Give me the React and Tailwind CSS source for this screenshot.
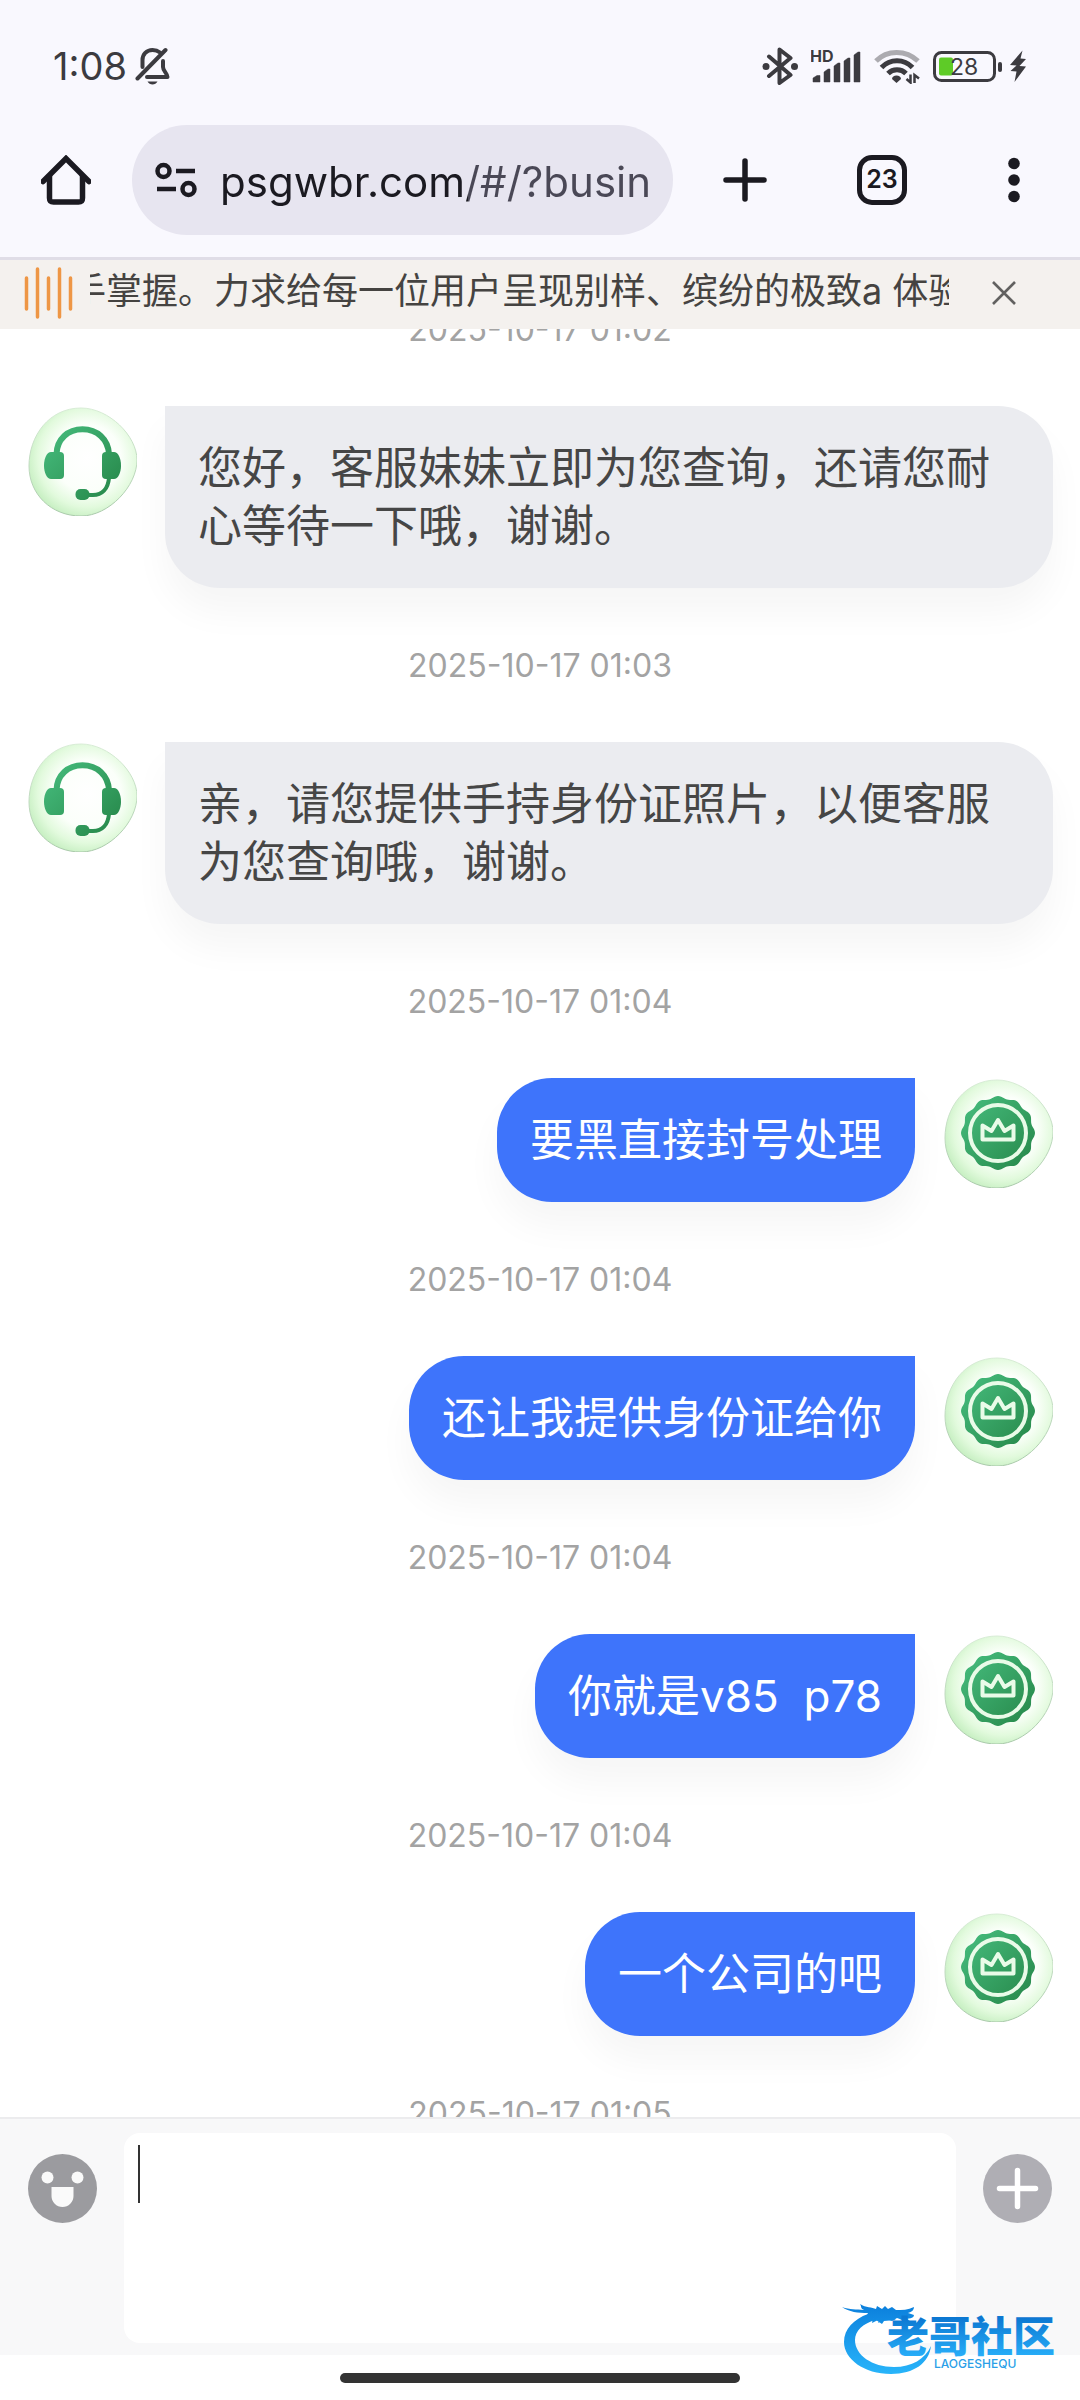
import { useState } from "react";

const messages = [
  { id: 1, time: "2025-10-17 01:02", from: "agent", text: "您好，客服妹妹立即为您查询，还请您耐心等待一下哦，谢谢。" },
  { id: 2, time: "2025-10-17 01:03", from: "agent", text: "亲，请您提供手持身份证照片，以便客服为您查询哦，谢谢。" },
  { id: 3, time: "2025-10-17 01:04", from: "user", text: "要黑直接封号处理" },
  { id: 4, time: "2025-10-17 01:04", from: "user", text: "还让我提供身份证给你" },
  { id: 5, time: "2025-10-17 01:04", from: "user", text: "你就是v85\u00a0\u00a0p78" },
  { id: 6, time: "2025-10-17 01:04", from: "user", text: "一个公司的吧" },
  { id: 7, time: "2025-10-17 01:05", from: "user", text: "" },
];

const BLOB =
  "M54 2C82 2 110 30 110 54C110 80 82 110 54 110C24 110 2 88 2 60C2 30 22 2 54 2Z";

// twelve soft teeth around the badge
const badgePoints = Array.from({ length: 144 }, (_, i) => {
  const a = (i / 144) * Math.PI * 2;
  const r = 35.8 + 1.2 * Math.cos(12 * a);
  return `${(55 + r * Math.sin(a)).toFixed(2)},${(55 - r * Math.cos(a)).toFixed(2)}`;
}).join(" ");

const AvatarBase = ({ id, label, children }) => (
  <svg viewBox="0 0 110 110" className="size-[110px] shrink-0" role="img" aria-label={label}>
    <defs>
      <radialGradient id={`${id}-bg`} cx="0.54" cy="0.46" r="0.56">
        <stop offset="0" stopColor="#ffffff" />
        <stop offset="0.55" stopColor="#fbfffa" />
        <stop offset="0.82" stopColor="#e2fadd" />
        <stop offset="1" stopColor="#c9f0c4" />
      </radialGradient>
      <linearGradient id={`${id}-edge`} x1="0" y1="0" x2="0" y2="1">
        <stop offset="0" stopColor="#d8ecd6" />
        <stop offset="1" stopColor="#a9c9aa" />
      </linearGradient>
      <linearGradient id={`${id}-fg`} x1="16" y1="20" x2="94" y2="94" gradientUnits="userSpaceOnUse">
        <stop offset="0.1" stopColor="#44b97a" />
        <stop offset="0.9" stopColor="#288a4c" />
      </linearGradient>
    </defs>
    <path d={BLOB} fill={`url(#${id}-bg)`} stroke={`url(#${id}-edge)`} strokeWidth="1" />
    {children}
  </svg>
);

const AgentAvatar = ({ id }) => (
  <AvatarBase id={id} label="客服">
    <g fill={`url(#${id}-fg)`}>
      <path d="M24 46h9a4 4 0 0 1 4 4v19a4 4 0 0 1-4 4h-9c-4 0-7-6-7-13.500s3-13.500 7-13.500z" />
      <path d="M79 46h8c4 0 7 6 7 13.500s-3 13.500-7 13.500h-8a4 4 0 0 1-4-4V50a4 4 0 0 1 4-4z" />
      <rect x="48.500" y="83" width="14" height="11" rx="5" />
    </g>
    <g fill="none" stroke={`url(#${id}-fg)`} strokeLinecap="round">
      <path d="M29.500 48C30 33 41 23.200 55.500 23.200S81 33 82 48" strokeWidth="6" />
      <path d="M82 72C81 83 75 89 66 89H60" strokeWidth="4" />
    </g>
  </AvatarBase>
);

const UserAvatar = ({ id }) => (
  <AvatarBase id={id} label="我">
    <polygon points={badgePoints} fill={`url(#${id}-fg)`} />
    <circle cx="55" cy="55" r="28" fill="none" stroke="#e9fbe8" strokeWidth="4" />
    <path
      d="M39.500 61.500V47.500L48.500 53L55 42L61.500 53L70.500 47.500V61.500Z"
      fill="none"
      stroke="#e9fbe8"
      strokeWidth="4"
      strokeLinejoin="round"
    />
  </AvatarBase>
);

const StatusBar = () => (
  <div className="flex h-[88px] items-end justify-between pr-[54px] pl-[53px] text-[#3c3b40]">
    <div className="flex h-11 items-center gap-2">
      <span className="text-[38px] leading-11">1:08</span>
      <svg viewBox="0 0 35 38" className="h-[38px] w-[35px]" fill="none" stroke="currentColor" strokeWidth="4" strokeLinecap="round">
        <path d="M2.500 31.500L30.500 3" />
        <path d="M25 5.500C22.500 3.500 20 3 17.500 3C11.500 3 7.500 7.500 7.500 13V20" />
        <path d="M28 14V20C28 24 32.500 26.500 32.500 30H12" strokeLinejoin="round" />
        <path d="M12.500 34.500h10c-1 2-3 3-5 3s-4-1-5-3z" fill="currentColor" stroke="none" />
      </svg>
    </div>
    <div className="flex h-11 items-center gap-[13px]">
      <svg viewBox="0 0 36 38" className="h-[38px] w-9" fill="none" stroke="currentColor" strokeWidth="4" strokeLinejoin="round" strokeLinecap="round">
        <path d="M7 9.500L28.500 28L17.500 36V2.500L28.500 11L7 29" />
        <circle cx="4" cy="19.500" r="3.500" fill="currentColor" stroke="none" />
        <circle cx="32.500" cy="19.500" r="3.500" fill="currentColor" stroke="none" />
      </svg>
      <svg viewBox="0 0 50 34" className="h-[34px] w-[50px]" fill="currentColor">
        <text x="-1" y="13" fontSize="16" fontWeight="700">HD</text>
        <path d="M2 33V29L6 26.500H9V33zM13 33V23L17 20H19V33zM23 33V17L27 14H29V33zM33 33V12L37 9H39V33zM43 33V6L47 3H49V33z" stroke="currentColor" strokeWidth="0.500" />
      </svg>
      <svg viewBox="0 0 46 36" className="h-9 w-[46px]" fill="none" stroke="currentColor" strokeWidth="5">
        <path d="M2 13C13 1.500 32 1.500 44 13" stroke="#acabb0" />
        <path d="M7.500 19.500C16 10.500 30 10.500 38.500 19.500" />
        <path d="M14 25.500C19 20.500 27 20.500 32 25.500" />
        <path d="M22.500 27.500c2.500 0 4.500 1.500 4.500 3.500l-4.500 4-4.500-4c0-2 2-3.500 4.500-3.500z" fill="currentColor" stroke="none" />
        <path d="M36.500 26.500V34.500L32.500 31M40.500 35V27L45 30.500" strokeWidth="2.500" />
      </svg>
      <div className="flex items-center gap-2">
        <svg viewBox="0 0 69 32" className="h-8 w-[69px]">
          <rect x="1.500" y="2.500" width="60" height="28" rx="7" fill="none" stroke="currentColor" strokeWidth="3" />
          <rect x="65" y="12" width="4" height="10" rx="2" fill="currentColor" />
          <rect x="6" y="7.500" width="14" height="18" rx="2" fill="#5ecb27" />
          <text x="17" y="25" fontSize="23" fill="currentColor">28</text>
        </svg>
        <svg viewBox="0 0 16 32" className="h-8 w-4" fill="currentColor">
          <path d="M12.500 0.500L0 15L6.500 15.500L0.500 21L6.500 21.500L4.500 32L16 16.500L9.500 16L16 9L10.500 8.500Z" />
        </svg>
      </div>
    </div>
  </div>
);

const Toolbar = () => (
  <div className="flex items-center pt-[37px] pr-[60px] pb-[22px] pl-[41px] text-[#1b1a21]">
    <button type="button" aria-label="主页" className="mr-[41px]">
      <svg viewBox="0 0 50 50" className="size-[50px]" fill="none" stroke="currentColor" strokeWidth="5.500">
        <path d="M2 26.500L25 3.500L48 26.500" strokeLinecap="round" />
        <path d="M8.500 20V43C8.500 46 9.500 47 12.500 47H37.500C40.500 47 41.500 46 41.500 43V20" />
      </svg>
    </button>
    <div className="flex h-[110px] min-w-0 flex-1 items-center gap-[23px] rounded-full bg-[#e7e5f0] pr-[22px] pl-[23px]">
      <svg viewBox="0 0 42 36" className="h-9 w-[42px] shrink-0" fill="none" stroke="currentColor" strokeWidth="4.500">
        <circle cx="8.500" cy="9" r="6" />
        <path d="M21 9H40M2 27H21" />
        <circle cx="33.500" cy="27" r="6" />
      </svg>
      <input
        type="text"
        aria-label="网址"
        readOnly
        value="psgwbr.com/#/?business"
        className="h-14 min-w-0 flex-1 bg-linear-to-r from-[#1b1a21] from-[248px] to-[#4a4856] to-[248px] bg-clip-text pt-0.5 text-[42px] text-transparent outline-none"
      />
    </div>
    <button type="button" aria-label="新标签页" className="ml-[50px]">
      <svg viewBox="0 0 44 44" className="size-11" fill="none" stroke="currentColor" strokeWidth="5.500" strokeLinecap="round">
        <path d="M22 3V41M3 22H41" />
      </svg>
    </button>
    <button
      type="button"
      aria-label="标签页"
      className="ml-[90px] flex size-[50px] items-center justify-center rounded-[15px] border-[5px] border-current text-[25px] font-semibold"
    >
      23
    </button>
    <button type="button" aria-label="菜单" className="ml-[101px]">
      <svg viewBox="0 0 12 46" className="h-[46px] w-3" fill="currentColor">
        <circle cx="6" cy="6.500" r="5.800" />
        <circle cx="6" cy="23" r="5.800" />
        <circle cx="6" cy="39.500" r="5.800" />
      </svg>
    </button>
  </div>
);

const Notice = ({ onClose }) => (
  <div className="flex h-[69px] shrink-0 items-center bg-[#f4f1ee] pr-16 pb-1 pl-6">
    <svg viewBox="0 0 50 52" className="mr-4 h-[52px] w-[50px] shrink-0" stroke="#ee9645" strokeWidth="3.500" strokeLinecap="round">
      <path d="M2.500 11V42M13.500 2V50M24.500 11V42M35.500 2V50M46.500 11V42" />
    </svg>
    <div className="min-w-0 flex-1 overflow-hidden">
      <p className="-ml-5 pb-1 text-4xl whitespace-nowrap text-[#454341]">
        手掌握。力求给每一位用户呈现别样、缤纷的极致a 体验
      </p>
    </div>
    <button type="button" aria-label="关闭" onClick={onClose} className="ml-[43px]">
      <svg viewBox="0 0 24 24" className="size-6" stroke="#626160" strokeWidth="2.600">
        <path d="M1 1L23 23M23 1L1 23" />
      </svg>
    </button>
  </div>
);

const Message = ({ message }) => {
  const mine = message.from === "user";
  return (
    <li>
      <time className="block pt-0.5 text-center text-[32px] leading-11 text-[#a3a3a3]">{message.time}</time>
      {message.text && (
        <div className={`mt-[54px] mb-[54px] flex items-start gap-7 ${mine ? "justify-end" : ""}`}>
          {!mine && <AgentAvatar id={`a${message.id}`} />}
          <p
            className={
              mine
                ? "rounded-[55px] rounded-tr-none bg-[#3e74fb] p-[33px] text-[44px] leading-[58px] text-white shadow-[0_24px_36px_rgba(0,0,0,0.04)]"
                : "min-w-0 flex-1 rounded-[55px] rounded-tl-none bg-[#ebecf0] p-[33px] text-[44px] leading-[58px] text-[#464646] shadow-[0_24px_36px_rgba(0,0,0,0.04)]"
            }
          >
            {message.text}
          </p>
          {mine && <UserAvatar id={`u${message.id}`} />}
        </div>
      )}
    </li>
  );
};

const CommunityLogo = () => (
  <div className="pointer-events-none absolute right-[17px] bottom-6 w-[221px]">
    <svg viewBox="0 0 221 72" className="block w-full">
      <defs>
        <linearGradient id="logo-blue" x1="0" y1="0" x2="0" y2="72" gradientUnits="userSpaceOnUse">
          <stop offset="0" stopColor="#0b7fdc" />
          <stop offset="1" stopColor="#29b6fb" />
        </linearGradient>
        <linearGradient id="logo-text" x1="0" y1="14" x2="0" y2="52" gradientUnits="userSpaceOnUse">
          <stop offset="0" stopColor="#0c78d2" />
          <stop offset="1" stopColor="#27adf8" />
        </linearGradient>
      </defs>
      <g fill="url(#logo-blue)">
        <path d="M26 10C12 15 2 25 2 38C2 55 22 70 49 70C72 70 87 59 89 42C83 55 70 63 52 63C30 63 13 51 13 36C13 27 21 19 34 16L40 20L42 17L54 16L46 12Z" />
        <path d="M0 3C8 6 14 5 22 6C18 4 20 3 18 0C24 4 30 3 34 5L35 2L40 5L43 2L46 5L50 3L54 6C60 6 66 6 72 3C72 6 70 8 66 9L72 11C72 14 68 15 63 14L68 17C63 18 58 15 55 14L50 17L44 15L36 19L38 15L30 19L31 14C26 14 24 12 26 9C16 9 7 8 0 3Z" />
      </g>
      <text x="45" y="48" fontSize="42" fontWeight="900" fill="url(#logo-text)">
        老哥社区
      </text>
      <text x="92" y="64" fontSize="12" fontWeight="500" fill="#2a9fe8">
        LAOGESHEQU
      </text>
    </svg>
  </div>
);

const Composer = () => {
  const [draft, setDraft] = useState("");
  return (
    <footer className="relative shrink-0 bg-white">
      <div className="flex items-start gap-[27px] border-t-2 border-[#ececee] bg-[#f8f8f9] px-7 pt-3.5 pb-3">
        <button type="button" aria-label="表情" className="mt-[21px]">
          <svg viewBox="0 0 69 69" className="size-[69px]">
            <circle cx="34.500" cy="34.500" r="34.500" fill="#9b9b9f" />
            <circle cx="19.500" cy="23.500" r="6" fill="#fafafa" />
            <circle cx="49.500" cy="23.500" r="6" fill="#fafafa" />
            <path d="M23.500 33H45.500V42a11 11 0 0 1-22 0z" fill="#fafafa" />
          </svg>
        </button>
        <div className="relative min-w-0 flex-1">
          <textarea
            aria-label="消息"
            value={draft}
            onChange={(e) => setDraft(e.target.value)}
            className="block h-[210px] w-full resize-none rounded-2xl bg-white px-3.5 py-3 text-[44px] leading-[58px] caret-transparent outline-none"
          />
          {draft === "" && <span className="absolute top-3 left-3.5 h-[58px] w-0.5 bg-[#333333]" />}
        </div>
        <button type="button" aria-label="更多" className="mt-[21px]">
          <svg viewBox="0 0 69 69" className="size-[69px]">
            <circle cx="34.500" cy="34.500" r="34.500" fill="#afaeb4" />
            <path d="M34.500 16.500V52.500M16.500 34.500H52.500" stroke="#ffffff" strokeWidth="5.500" strokeLinecap="round" />
          </svg>
        </button>
      </div>
      <div className="flex h-[45px] items-center justify-center">
        <span className="h-2.5 w-[37%] rounded-full bg-[#333333]" />
      </div>
      <CommunityLogo />
    </footer>
  );
};

const App = () => {
  const [showNotice, setShowNotice] = useState(true);

  return (
    <div className="flex h-screen flex-col bg-white font-[Inter,'Noto_Sans_CJK_SC',sans-serif]">
      <header className="shrink-0 border-b-[3px] border-[#e0dde7] bg-[#f9f8fe]">
        <StatusBar />
        <Toolbar />
      </header>
      {showNotice && <Notice onClose={() => setShowNotice(false)} />}
      <main className="min-h-0 flex-1 overflow-hidden">
        <ul className="-mt-[23px] px-[27px]">
          {messages.map((message) => (
            <Message key={message.id} message={message} />
          ))}
        </ul>
      </main>
      <Composer />
    </div>
  );
};

export default App;
